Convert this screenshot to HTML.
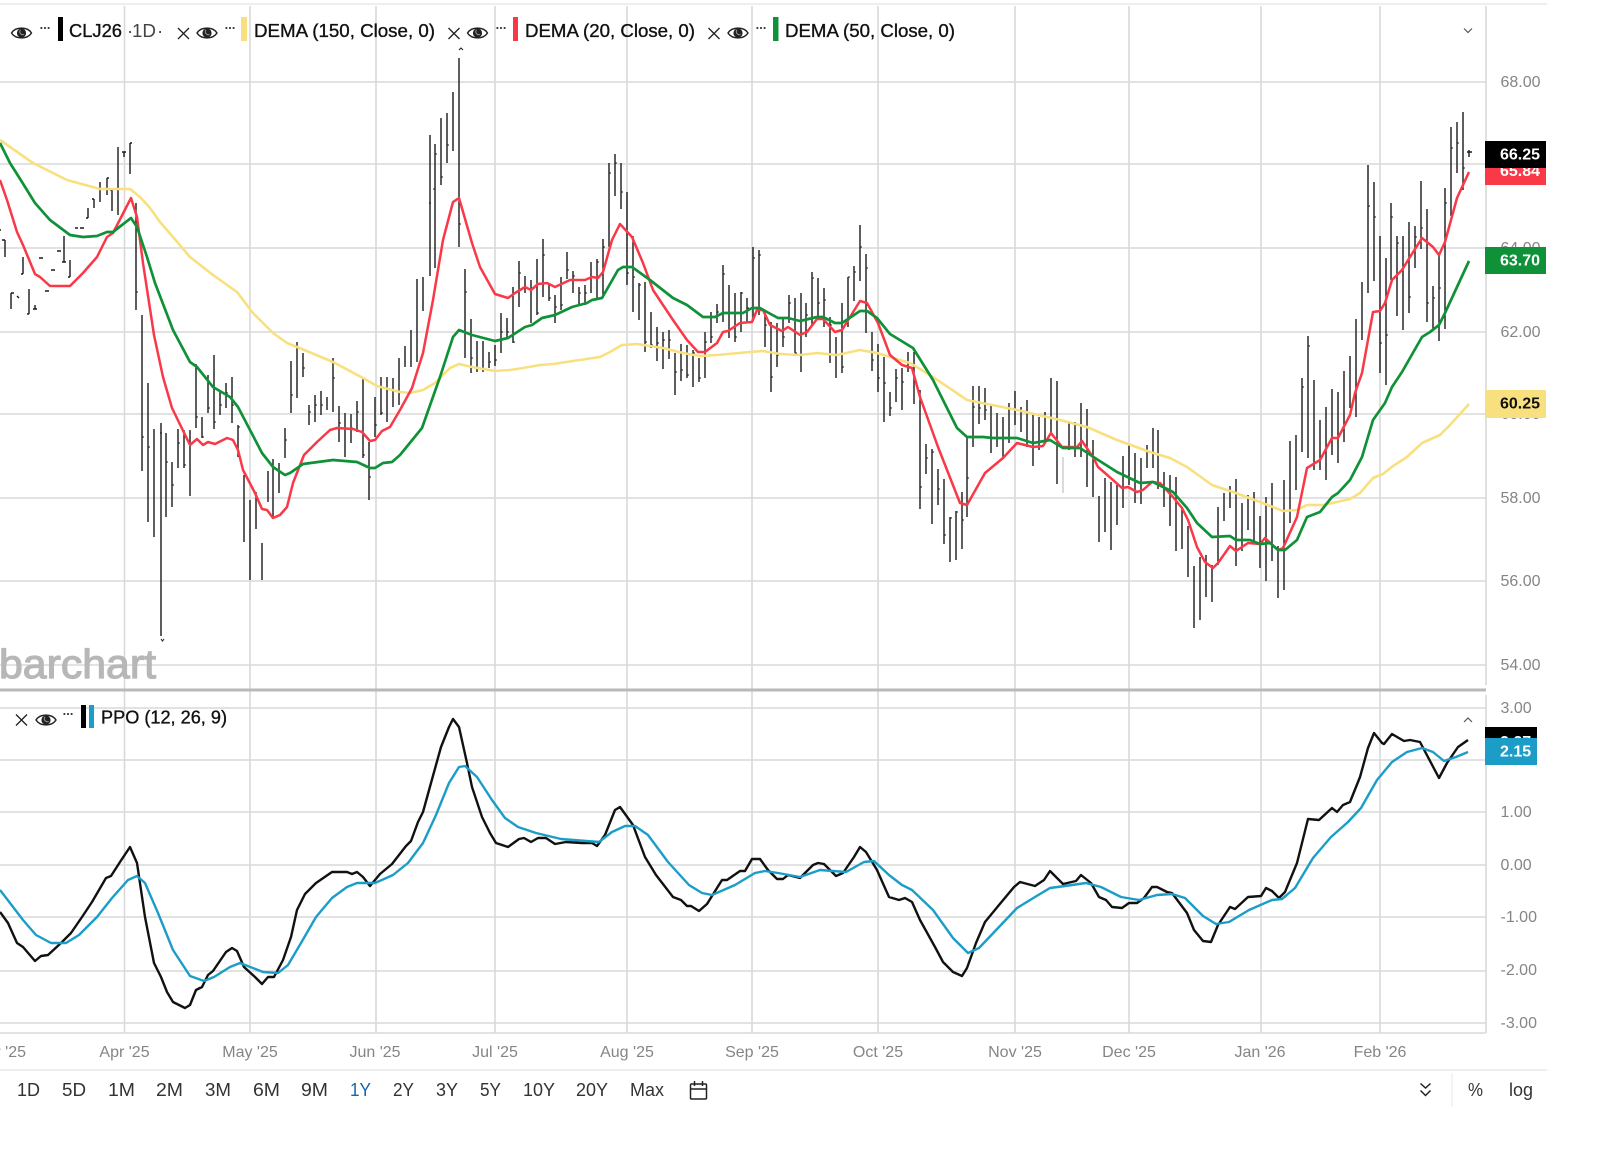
<!DOCTYPE html>
<html><head><meta charset="utf-8"><title>CLJ26 chart</title>
<style>
html,body{margin:0;padding:0;background:#fff;width:1600px;height:1159px;overflow:hidden}
svg{display:block;font-family:"Liberation Sans",sans-serif;filter:blur(.3px)}
.gl{stroke:#d9d9d9;stroke-width:1.6;fill:none}
.ax{fill:#858585;font-size:16px}
.xl{fill:#858585;font-size:16px;text-anchor:middle}
.tb{fill:#333;font-size:18px}
.lg{fill:#111;font-size:18.6px;stroke:#111;stroke-width:.35px}
.ic{fill:none;stroke:#222;stroke-width:1.4}
.pl{fill:#fff;font-size:16px;font-weight:bold}
</style></head><body>
<svg width="1600" height="1159" viewBox="0 0 1600 1159" xmlns="http://www.w3.org/2000/svg">
<defs>
<g id="eye"><path class="ic" d="M-10 0C-6-6.5 6-6.5 10 0C6 6.5-6 6.5-10 0Z"/><circle r="4.6" fill="#222"/><path d="M-1 -3.2A3 3 0 0 0 2.6 1.4" fill="none" stroke="#999" stroke-width="1"/></g>
<g id="dots"><path d="M-4.5 0h1.8M-.9 0h1.8M2.7 0h1.8" stroke="#222" stroke-width="1.8" fill="none"/></g>
<g id="x"><path d="M-5.5-5.5L5.5 5.5M5.5-5.5L-5.5 5.5" stroke="#222" stroke-width="1.3" fill="none"/></g>
</defs>
<rect width="1600" height="1159" fill="#fff"/>
<!-- frame -->
<path d="M0 4H1547" stroke="#eeeeee" stroke-width="2"/>
<!-- horizontal grid -->
<path class="gl" d="M0 82H1486M0 164H1486M0 248H1486M0 332H1486M0 414H1486M0 498H1486M0 581H1486M0 665H1486M0 708H1486M0 760H1486M0 812H1486M0 865H1486M0 917H1486M0 971H1486M0 1023H1486M0 1033H1486"/>
<!-- vertical grid -->
<path class="gl" d="M124.5 6V1033M250 6V1033M376 6V1033M495 6V1033M627 6V1033M752 6V1033M878 6V1033M1015 6V1033M1129 6V1033M1261 6V1033M1380 6V1033M1486 6V685M1486 695V1033"/>
<path d="M0 690H1486" stroke="#b9b9b9" stroke-width="3"/>
<path d="M0 1070H1547" stroke="#eeeeee" stroke-width="2"/>
<!-- axis labels -->
<g class="ax">
<text x="1500.5" y="87">68.00</text><text x="1500.5" y="253">64.00</text><text x="1500.5" y="337">62.00</text><text x="1500.5" y="419">60.00</text><text x="1500.5" y="503">58.00</text><text x="1500.5" y="586">56.00</text><text x="1500.5" y="670">54.00</text>
<text x="1500.5" y="713">3.00</text><text x="1500.5" y="817">1.00</text><text x="1500.5" y="870">0.00</text><text x="1500.5" y="922">-1.00</text><text x="1500.5" y="975">-2.00</text><text x="1500.5" y="1028">-3.00</text>
</g>
<g class="xl">
<text x="26" y="1057" style="text-anchor:end">Mar '25</text>
<text x="124.5" y="1057">Apr '25</text><text x="250" y="1057">May '25</text><text x="375" y="1057">Jun '25</text><text x="495" y="1057">Jul '25</text><text x="627" y="1057">Aug '25</text><text x="752" y="1057">Sep '25</text><text x="878" y="1057">Oct '25</text><text x="1015" y="1057">Nov '25</text><text x="1129" y="1057">Dec '25</text><text x="1260" y="1057">Jan '26</text><text x="1380" y="1057">Feb '26</text>
</g>
<!-- watermark -->
<text x="-1" y="678" font-size="41" fill="#b7b7b7" stroke="#b7b7b7" stroke-width="1.2" textLength="157" lengthAdjust="spacingAndGlyphs">barchart</text>
<!-- price bars -->
<path fill="none" stroke="#1a1a1a" stroke-width="1.4" d="M0 230h1M5 240V257M2 240h3M11 293V309M11 293h3M17 296l2 2M23 257V274M23 274h-2M29 289V314M29 314h-2M35 305V309M33 309h4M39 258h4M45 291h4M51 270h4M57 251h4M64 236V262M62 262h4M70 260V277M68 277h2M75 228h3M80 228h4M88 208V218M86 218h2M94 199V208M92 199h2M100 182V202M107 178V195M107 178h2M112 190V211M110 190h2M118 147V215M122 152h4M124 152V157M130 143V174M130 143h2
M136 203V310M142 315V471M148 383V522M154 429V537M161 423V636M166 433V517M172 462V507M178 429V468M184 430V468M190 430V496M196 364V428M202 417V438M208 375V413M214 355V429M220 392V415M226 383V408M232 377V423M238 425V457M244 475V542M250 500V580M256 492V529M262 543V580M268 471V502M273 459V518M279 463V493M285 428V458M291 361V413M297 342V398M303 353V377M309 405V425M315 395V422M321 391V415M327 397V410M333 358V412M339 406V442M345 413V457M351 414V443M357 401V432M363 378V458M369 442V500M375 397V437M381 377V415M387 377V422M393 378V407M399 358V405
M405 346V367M411 330V367M417 279V362M423 277V311M430 135V276M435 144V268M441 118V185M447 113V163M453 92V151M459 58V247M465 269V358M471 319V373M477 341V372M483 341V372M489 352V368M495 345V366M501 313V353M507 318V337M513 287V343M519 261V307M525 276V293M531 280V323M537 259V315M543 239V297M549 285V301M555 295V323M561 277V310M567 252V279M573 271V293M579 287V304M585 285V305M591 262V293M597 259V298M603 239V298M609 163V247M615 154V196M621 163V209M627 192V285M633 236V312M639 283V320M645 282V352M651 312V348M657 327V361M663 332V369M669 330V359M675 353V395M681 344V381M687 345V378M693 350V387M699 358V382M705 332V378M711 312V343M717 304V323M723 265V322M729 285V338M735 293V342M741 292V332M747 298V323M753 247V320M759 250V315M765 313V347M771 322V392M777 323V367M783 318V347M789 295V323M795 298V353
M801 293V372M806 303V337M812 272V326M818 278V317M824 288V327M830 317V363M836 337V378M842 303V373M848 277V327M854 266V301M860 225V281M866 254V333M872 332V371M878 344V392M884 357V422M890 392V416M896 369V402M902 368V410M908 352V372M914 352V404M920 390V509M926 444V474M932 449V524M938 469V505M944 479V544M950 517V562M956 511V560M962 492V549M967 437V517M973 386V447M979 386V424M985 388V420M991 406V453M997 413V447M1003 417V458M1009 403V443M1015 391V425M1021 407V432M1027 400V447M1033 413V466M1039 417V450M1045 412V443M1051 378V433M1057 381V484M1069 421V450M1075 422V457M1081 403V457M1087 409V487M1093 440V497M1099 496V542M1105 478V532M1111 482V550M1117 485V525M1123 456V508M1129 445V485M1135 453V503M1141 458V504M1147 445V468M1153 428V468M1158 430V489M1164 472V507M1170 475V526M1176 477V551M1182 507V549M1188 526V577M1194 566V628M1200 557V620M1206 555V597M1212 565V602M1218 507V565M1224 493V521M1230 486V508M1236 479V566M1242 503V551M1248 495V530M1254 492V543M1260 516V568M1266 497V581M1272 483V561M1278 546V598M1284 480V590M1290 441V523M1296 435V490M1302 378V452M1308 336V458M1314 380V470M1320 420V470M1326 407V480M1332 389V455M1338 392V463M1344 371V442M1350 356V408M1356 319V417M1362 282V340M1368 165V293M1374 182V281M1380 236V373M1386 258V385M1391 203V280M1397 236V316M1403 236V330M1409 222V313M1415 226V268M1421 181V249M1427 209V322M1433 286V331M1439 253V341M1445 188V329M1451 127V216M1457 122V173M1463 112V190M1469 150V157M1467 152h5"/>
<!-- bar ticks -->
<path fill="none" stroke="#1a1a1a" stroke-width="1.1" d="M136 292h2M142 437h2M148 447h2M160 433h2M166 462h2M172 485h2M178 443h2M184 465h2M196 417h2M202 437h2M208 408h2M214 422h2M220 405h2M226 393h2M232 405h2M238 427h2M285 440h2M291 395h2M297 348h2M303 368h2M309 412h2M315 405h2M321 405h2M333 378h2M339 423h2M351 428h2M357 412h2M363 455h2M369 477h2M375 425h2M381 413h2M429 203h2M435 154h2M435 189h-2M441 177h2M447 145h2M459 224h2M465 292h2M471 358h2M477 368h2M483 369h2M489 362h2M495 360h2M501 332h2M507 332h2M513 342h2M519 273h2M525 288h2M531 288h2M537 313h2M543 255h2M549 298h2M555 307h2M561 305h2M567 270h2M573 276h2M579 293h2M585 293h2M591 277h2M597 262h2M603 247h2M609 173h2M615 163h2M621 192h2M627 273h2M633 277h2M639 285h2M645 342h2M651 345h2M657 343h2M663 340h2M669 340h2M675 372h2M681 370h2M687 375h2M693 353h2M699 378h2M705 342h2M711 337h2M717 312h2M723 274h2M729 330h2M735 337h2M741 293h2M747 308h2M753 258h2M759 255h2M765 325h2M771 377h2M777 355h2M783 337h2M789 303h2M795 353h2M806 315h2M812 278h2M818 303h2M824 300h2M830 325h2M836 355h2M842 367h2M848 277h2M854 272h2M860 247h2M866 268h2M872 360h2M878 378h2M884 383h2M890 408h2M896 378h2M902 382h2M920 487h2M926 458h2M932 452h2M938 489h2M944 535h2M950 518h2M956 512h2M962 520h2M967 478h2M973 407h2M979 408h2M985 410h2M1302 387h2M1308 346h2M1368 206h2M1374 217h2M1380 343h2M1386 335h2M1391 217h2M1397 243h2M1409 297h2M1415 237h2M1421 228h2M1427 303h2M1433 298h2M1439 288h2M1445 203h2M1451 148h2M1457 143h2M1463 168h2"/>
<path fill="none" stroke="#1a1a1a" stroke-width="1" d="M459 50l2-2 2 2M161 639l1.5 2 1.5-2"/>
<path fill="none" stroke="#c9c9c9" stroke-width="1.4" d="M1063 457V493"/>
<!-- DEMA 150 -->
<path fill="none" stroke="#f9e07f" stroke-width="2.6" stroke-linejoin="round" d="M0 140L33 163 67 180 100 189 130 189 140 197 150 208 160 222 173 237 190 257 213 275 237 292 253 313 273 333 287 343 297 347 333 362 363 378 377 386 400 392 410 393 423 390 435 383 450 368 459 364 472 367 495 371 510 370 523 368 540 365 553 364 573 361 600 357 610 352 622 345 637 344 663 348 683 353 700 356 717 355 750 352 763 351 780 354 800 355 817 353 837 355 860 350 877 353 910 363 933 377 967 400 1017 410 1060 420 1087 427 1117 440 1150 452 1170 458 1187 467 1212 485 1233 492 1260 502 1283 511 1297 510 1307 505 1323 505 1337 502 1350 499 1360 493 1373 478 1383 474 1393 466 1407 457 1422 443 1440 435 1450 425 1469 404"/>
<!-- DEMA 20 -->
<path fill="none" stroke="#f93848" stroke-width="2.5" stroke-linejoin="round" d="M0 180L7 200 17 232 23 245 35 274 40 277 50 286 70 286 83 273 97 257 107 237 113 233 131 198 137 217 143 263 154 335 163 377 172 408 190 445 197 439 203 445 208 442 215 444 227 438 233 440 238 450 243 470 255 493 262 509 267 510 273 518 280 515 287 507 293 483 304 455 317 442 330 430 337 428 353 429 362 432 370 441 375 440 382 431 390 427 400 410 412 388 423 353 433 300 443 240 453 202 459 198 472 243 480 267 495 294 508 298 515 293 525 287 531 290 538 284 547 283 555 287 570 280 585 280 592 277 598 278 603 272 612 240 620 224 632 237 643 263 653 290 673 320 687 340 698 352 705 352 717 343 723 332 728 331 740 323 752 322 757 310 763 310 770 325 782 331 788 327 800 335 807 332 817 319 823 319 835 332 842 330 860 301 867 303 878 323 890 355 902 365 912 368 920 397 938 447 960 503 967 505 985 473 1003 458 1017 443 1033 447 1043 446 1051 433 1062 447 1077 447 1082 441 1093 457 1098 467 1105 473 1122 488 1128 487 1137 492 1143 490 1152 482 1160 483 1173 497 1182 508 1188 520 1197 547 1205 562 1213 568 1218 563 1230 546 1236 551 1248 543 1260 544 1265 538 1278 550 1283 548 1297 517 1307 468 1320 460 1332 438 1338 438 1350 415 1355 393 1362 373 1373 312 1380 311 1385 303 1392 280 1402 270 1410 257 1422 238 1433 247 1439 255 1445 242 1457 198 1469 172"/>
<!-- DEMA 50 -->
<path fill="none" stroke="#0f9138" stroke-width="2.7" stroke-linejoin="round" d="M0 143L10 163 22 182 35 203 50 220 70 235 83 237 97 236 107 232 113 232 131 218 137 227 147 257 155 283 173 330 190 362 197 367 213 387 230 397 238 407 262 453 273 467 285 475 290 473 303 464 333 460 357 462 370 468 375 468 383 463 392 462 400 455 422 428 440 377 453 337 459 330 472 335 495 341 508 338 525 327 532 325 542 318 555 315 572 307 587 303 592 300 602 298 618 270 623 267 632 267 650 280 673 298 687 305 703 317 715 317 723 313 743 313 752 308 760 308 767 312 778 318 788 318 800 321 817 317 823 317 835 323 842 323 860 311 867 311 877 318 890 334 913 348 933 380 957 428 967 437 983 437 993 438 1017 438 1033 443 1050 440 1063 448 1080 448 1095 458 1117 472 1140 483 1153 482 1173 492 1187 508 1197 523 1212 537 1230 536 1236 540 1250 540 1260 544 1270 543 1278 550 1285 550 1297 540 1307 517 1320 512 1332 497 1338 493 1350 480 1362 457 1373 420 1385 403 1392 387 1402 372 1422 337 1430 332 1439 325 1445 313 1469 261"/>
<!-- PPO -->
<path fill="none" stroke="#111" stroke-width="2.4" stroke-linejoin="round" d="M0 912L8 923 17 943 23 947 35 961 41 956 48 955 61 943 71 933 82 917 92 902 106 878 111 876 120 862 130 847 137 863 145 917 154 963 161 977 167 992 173 1002 185 1008 190 1005 196 990 202 987 208 975 213 971 226 952 232 948 237 951 244 967 255 977 262 984 268 977 274 977 283 960 291 937 297 910 305 894 316 883 332 872 347 872 352 874 357 872 363 877 370 886 380 874 392 864 406 846 411 841 418 822 423 812 431 783 441 747 449 727 453 719 459 727 467 763 472 787 482 817 490 833 496 843 508 847 519 839 524 838 531 842 538 838 546 838 555 844 566 842 582 843 592 843 597 846 605 835 615 810 620 807 633 825 645 857 656 875 673 897 681 900 687 906 691 906 699 911 707 904 722 880 727 880 740 871 745 871 752 859 760 859 768 870 777 879 783 879 788 875 800 878 813 865 818 863 824 864 836 876 843 873 854 857 860 847 866 852 877 870 889 897 899 900 905 898 912 902 920 920 935 947 943 962 953 972 962 976 967 968 976 943 985 922 999 905 1014 887 1020 882 1035 886 1044 880 1050 871 1063 884 1076 881 1081 875 1091 883 1099 897 1106 900 1112 907 1122 908 1129 903 1137 903 1144 898 1152 887 1157 887 1167 892 1172 893 1187 913 1194 930 1203 941 1211 942 1218 925 1230 907 1235 909 1248 897 1261 896 1266 888 1272 891 1279 898 1285 892 1297 863 1308 819 1319 820 1332 808 1337 812 1343 805 1350 802 1360 777 1368 748 1374 733 1382 743 1384 744 1392 734 1404 741 1410 740 1420 742 1439 778 1447 763 1458 747 1468 740"/>
<path fill="none" stroke="#1b9dc8" stroke-width="2.4" stroke-linejoin="round" d="M0 890L10 903 23 920 36 935 51 943 66 943 79 935 97 917 112 898 128 880 137 876 145 883 158 913 173 950 190 976 204 981 214 977 230 967 240 963 263 972 278 973 288 965 301 943 316 917 332 898 347 887 357 883 375 883 393 875 408 863 423 843 436 815 449 783 459 767 465 766 477 777 492 800 505 818 518 827 536 833 561 839 599 842 612 832 625 826 635 826 648 835 668 862 689 885 702 893 712 895 735 885 755 873 765 871 778 873 800 877 820 870 846 872 864 862 874 861 889 875 902 885 912 890 933 910 953 938 968 953 979 948 999 927 1017 908 1035 897 1050 888 1065 886 1086 883 1101 887 1121 897 1139 900 1157 895 1172 894 1185 898 1203 916 1216 924 1229 922 1249 910 1272 900 1282 899 1295 888 1313 858 1331 837 1348 822 1361 808 1377 780 1392 762 1407 752 1422 748 1433 752 1444 761 1456 757 1468 752"/>
<!-- price labels -->
<rect x="1485" y="165" width="61" height="20" fill="#f93848"/><text class="pl" x="1500" y="176">65.84</text>
<rect x="1485" y="141" width="61" height="27" fill="#000"/><text class="pl" x="1500" y="159.5">66.25</text>
<rect x="1485" y="247" width="61" height="27" fill="#0f9138"/><text class="pl" x="1500" y="265.5">63.70</text>
<rect x="1485" y="390" width="61" height="28" fill="#f8e07f"/><text class="pl" x="1500" y="408.5" style="fill:#111">60.25</text>
<rect x="1485" y="727" width="52" height="14" fill="#000"/><text class="pl" x="1500" y="747">2.27</text>
<rect x="1485" y="738" width="52" height="27" fill="#1b9dc8"/><text class="pl" x="1500" y="756.5">2.15</text>
<!-- legend -->
<use href="#eye" x="21.5" y="33"/><use href="#dots" x="45" y="28"/>
<rect x="58" y="17" width="5" height="24" fill="#000"/>
<text class="lg" x="69" y="37" textLength="53" lengthAdjust="spacingAndGlyphs">CLJ26</text>
<text x="127" y="37" font-size="18.6" fill="#444">·</text><text x="132" y="37" font-size="18.6" fill="#444" textLength="24" lengthAdjust="spacingAndGlyphs">1D</text><text x="157" y="37" font-size="18.6" fill="#444">·</text>
<use href="#x" x="183.5" y="33.5"/><use href="#eye" x="207" y="33"/><use href="#dots" x="230" y="28"/>
<rect x="241" y="17" width="6" height="24" fill="#f9e07f"/>
<text class="lg" x="254" y="37" textLength="181" lengthAdjust="spacingAndGlyphs">DEMA (150, Close, 0)</text>
<use href="#x" x="454" y="33.5"/><use href="#eye" x="477.5" y="33"/><use href="#dots" x="501" y="28"/>
<rect x="513" y="17" width="5" height="24" fill="#f93848"/>
<text class="lg" x="525" y="37" textLength="170" lengthAdjust="spacingAndGlyphs">DEMA (20, Close, 0)</text>
<use href="#x" x="714" y="33.5"/><use href="#eye" x="738" y="33"/><use href="#dots" x="761" y="28"/>
<rect x="773" y="17" width="5.5" height="24" fill="#0f9138"/>
<text class="lg" x="785" y="37" textLength="170" lengthAdjust="spacingAndGlyphs">DEMA (50, Close, 0)</text>
<path d="M1464 28.5l4 4 4-4" fill="none" stroke="#555" stroke-width="1.2"/>
<!-- PPO legend -->
<use href="#x" x="21.5" y="720"/><use href="#eye" x="46" y="720"/><use href="#dots" x="68" y="714"/>
<rect x="81" y="705" width="5" height="23" fill="#000"/><rect x="89" y="705" width="5" height="23" fill="#1b9dc8"/>
<text class="lg" x="101" y="723.5" textLength="126" lengthAdjust="spacingAndGlyphs">PPO (12, 26, 9)</text>
<path d="M1464 722l4-4 4 4" fill="none" stroke="#555" stroke-width="1.2"/>
<!-- toolbar -->
<g class="tb">
<text x="17" y="1096" textLength="23" lengthAdjust="spacingAndGlyphs">1D</text>
<text x="62" y="1096" textLength="24" lengthAdjust="spacingAndGlyphs">5D</text>
<text x="108" y="1096" textLength="27" lengthAdjust="spacingAndGlyphs">1M</text>
<text x="156" y="1096" textLength="27" lengthAdjust="spacingAndGlyphs">2M</text>
<text x="205" y="1096" textLength="26" lengthAdjust="spacingAndGlyphs">3M</text>
<text x="253" y="1096" textLength="27" lengthAdjust="spacingAndGlyphs">6M</text>
<text x="301" y="1096" textLength="27" lengthAdjust="spacingAndGlyphs">9M</text>
<text x="350" y="1096" textLength="21" lengthAdjust="spacingAndGlyphs" style="fill:#1565b0">1Y</text>
<text x="393" y="1096" textLength="21" lengthAdjust="spacingAndGlyphs">2Y</text>
<text x="436" y="1096" textLength="22" lengthAdjust="spacingAndGlyphs">3Y</text>
<text x="480" y="1096" textLength="21" lengthAdjust="spacingAndGlyphs">5Y</text>
<text x="523" y="1096" textLength="32" lengthAdjust="spacingAndGlyphs">10Y</text>
<text x="576" y="1096" textLength="32" lengthAdjust="spacingAndGlyphs">20Y</text>
<text x="630" y="1096" textLength="34" lengthAdjust="spacingAndGlyphs">Max</text>
<text x="1468" y="1096" textLength="15" lengthAdjust="spacingAndGlyphs">%</text>
<text x="1509" y="1096" textLength="24" lengthAdjust="spacingAndGlyphs">log</text>
</g>
<g fill="none" stroke="#222" stroke-width="1.5">
<rect x="690.5" y="1084" width="16" height="15" rx="1"/><path d="M690.5 1089H706.5M694.5 1081V1086M702.5 1081V1086"/>
<path d="M1420.5 1083.5l5 4.5 5-4.5M1420.5 1090.5l5 5 5-5"/>
</g>
<path d="M1452 1073V1107" stroke="#e8e8e8" stroke-width="1"/>
</svg>
</body></html>
